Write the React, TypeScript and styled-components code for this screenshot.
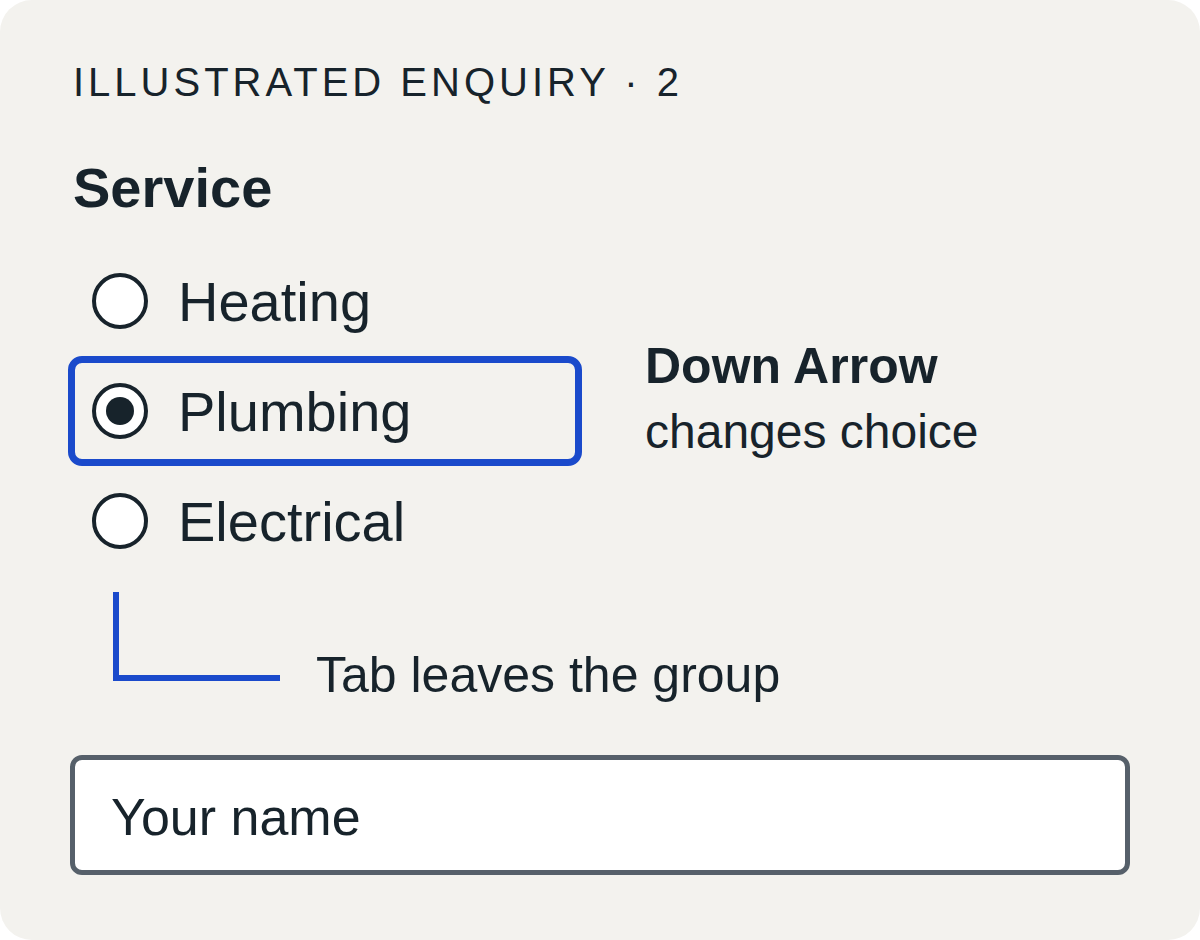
import React, { useState } from "react";
import styled, { createGlobalStyle } from "styled-components";

const GlobalStyle = createGlobalStyle`
  html, body {
    margin: 0;
    padding: 0;
    background: #ffffff;
  }
  body {
    font-family: "Liberation Sans", Arial, sans-serif;
    color: #17232b;
  }
  * { box-sizing: border-box; }
`;

const Card = styled.main`
  width: 1200px;
  height: 940px;
  background: #f3f2ee;
  border-radius: 32px;
  padding: 58px 70px 64px 73px;
  display: flex;
  flex-direction: column;
`;

const Eyebrow = styled.div`
  font-size: 40px;
  line-height: 48px;
  letter-spacing: 4px;
  text-transform: uppercase;
  margin: 0;
`;

const Fieldset = styled.fieldset`
  border: 0;
  margin: 50px 0 0 0;
  padding: 0;
  min-width: 0;
`;

const Legend = styled.legend`
  padding: 0;
  font-size: 56px;
  line-height: 64px;
  font-weight: 700;
`;

const GroupRow = styled.div`
  display: flex;
  align-items: flex-start;
  gap: 63px;
  margin: 26px 0 0 -5px;
`;

const Options = styled.div`
  display: flex;
  flex-direction: column;
  width: 514px;
`;

const Option = styled.label<{ $focused: boolean }>`
  display: flex;
  align-items: center;
  gap: 30px;
  height: 110px;
  padding: 0 0 0 17px;
  border: 7px solid ${(p) => (p.$focused ? "#1a4acb" : "transparent")};
  border-radius: 14px;
  cursor: pointer;
`;

const HiddenInput = styled.input`
  position: absolute;
  opacity: 0;
  width: 1px;
  height: 1px;
  pointer-events: none;
`;

const Circle = styled.span<{ $checked: boolean }>`
  flex: none;
  width: 56px;
  height: 56px;
  border-radius: 50%;
  border: 4px solid #17232b;
  background: #ffffff;
  display: grid;
  place-items: center;

  &::after {
    content: "";
    width: 28px;
    height: 28px;
    border-radius: 50%;
    background: #17232b;
    display: ${(p) => (p.$checked ? "block" : "none")};
  }
`;

const OptionText = styled.span`
  font-size: 56px;
  line-height: 64px;
  padding-top: 1px;
`;

const KeyNote = styled.div`
  margin-top: 87px;
  display: flex;
  flex-direction: column;
`;

const KeyName = styled.strong`
  font-size: 50px;
  line-height: 66px;
  font-weight: 700;
`;

const KeyEffect = styled.span`
  font-size: 48px;
  line-height: 66px;
`;

const TabHint = styled.div`
  display: flex;
  align-items: flex-start;
  gap: 36px;
  margin: 16px 0 0 40px;
`;

const Elbow = styled.span`
  flex: none;
  width: 167px;
  height: 89px;
  border-left: 6px solid #1a4acb;
  border-bottom: 6px solid #1a4acb;
`;

const HintText = styled.span`
  font-size: 50px;
  line-height: 59px;
  margin-top: 54px;
`;

const NameInput = styled.input`
  margin: 50px 0 0 -3px;
  width: 1060px;
  height: 120px;
  border: 5px solid #56606a;
  border-radius: 12px;
  background: #ffffff;
  padding: 4px 36px 0 36px;
  font-family: "Liberation Sans", Arial, sans-serif;
  font-size: 52px;
  color: #17232b;
  outline: none;

  &::placeholder {
    color: #17232b;
    opacity: 1;
  }
`;

const services = ["Heating", "Plumbing", "Electrical"];

export default function App() {
  const [choice, setChoice] = useState("Plumbing");

  return (
    <>
      <GlobalStyle />
      <Card>
        <Eyebrow>Illustrated enquiry · 2</Eyebrow>
        <Fieldset>
          <Legend>Service</Legend>
          <GroupRow>
            <Options role="radiogroup">
              {services.map((s) => (
                <Option key={s} $focused={s === choice}>
                  <HiddenInput
                    type="radio"
                    name="service"
                    value={s}
                    checked={s === choice}
                    onChange={() => setChoice(s)}
                  />
                  <Circle $checked={s === choice} />
                  <OptionText>{s}</OptionText>
                </Option>
              ))}
            </Options>
            <KeyNote>
              <KeyName>Down Arrow</KeyName>
              <KeyEffect>changes choice</KeyEffect>
            </KeyNote>
          </GroupRow>
        </Fieldset>
        <TabHint>
          <Elbow />
          <HintText>Tab leaves the group</HintText>
        </TabHint>
        <NameInput placeholder="Your name" aria-label="Your name" />
      </Card>
    </>
  );
}
